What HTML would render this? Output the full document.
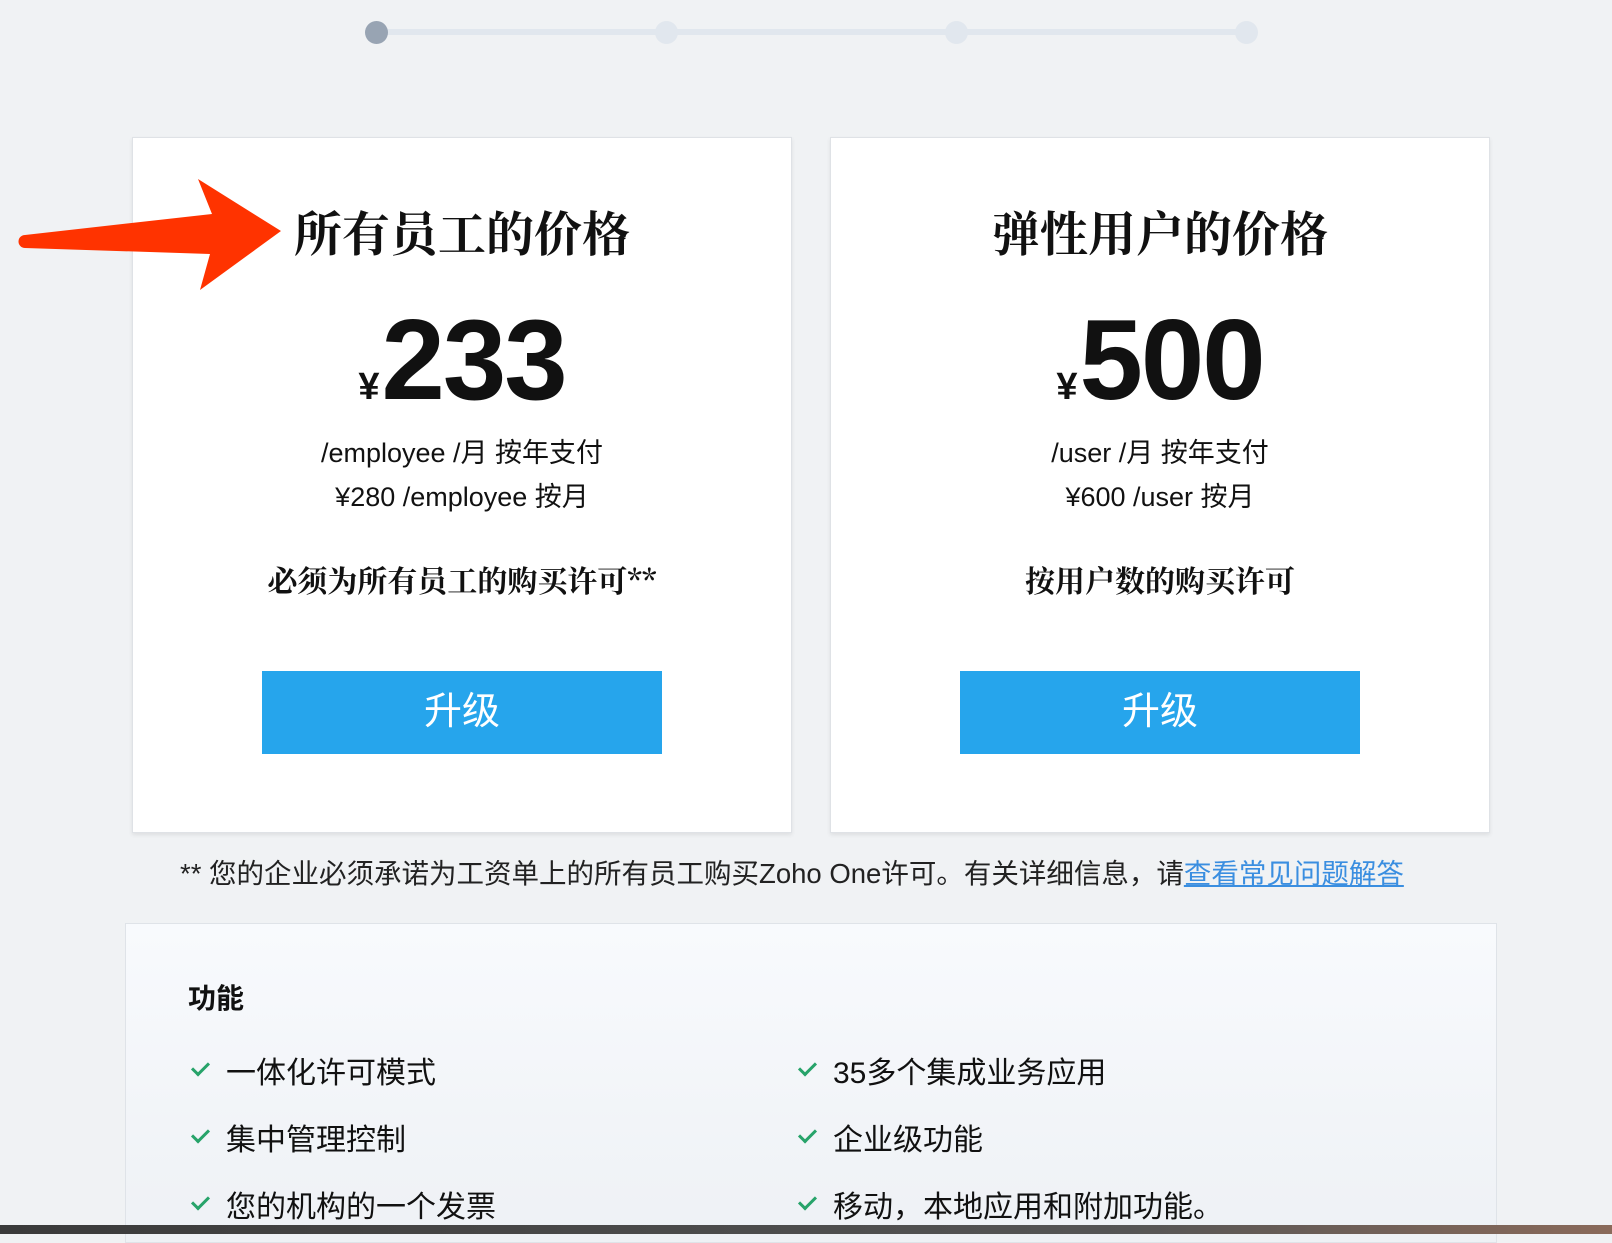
<!DOCTYPE html>
<html><head><meta charset="utf-8"><style>
*{margin:0;padding:0;box-sizing:border-box}
body{width:1612px;height:1234px;overflow:hidden;background:#f0f2f4;position:relative;font-family:"Liberation Sans","Noto Sans CJK SC",sans-serif;color:#111}
.line{position:absolute;top:29px;left:376px;width:870px;height:6px;background:#e1e7ee}
.dot{position:absolute;top:21px;width:23px;height:23px;border-radius:50%;background:#e1e7ee}
.card{position:absolute;top:137px;width:660px;height:696px;background:#fff;border:1px solid #dfe2e6;box-shadow:0 2px 4px rgba(0,0,0,.08);text-align:center}
.t{position:absolute;top:58px;width:100%;font-family:"Noto Serif CJK SC",serif;font-weight:700;font-size:48px;line-height:70px}
.p{position:absolute;top:158px;width:100%;font-weight:700;font-size:114px;line-height:130px;letter-spacing:-2px}
.p small{font-size:38px;margin-right:4px}
.l{position:absolute;width:100%;font-size:27px}
.b{position:absolute;width:100%;font-family:"Noto Serif CJK SC",serif;font-weight:700;font-size:30px}
.btn{position:absolute;left:129px;top:533px;width:400px;height:83px;background:#26a5ec;color:#fff;font-size:38px;line-height:83px}
.foot{position:absolute;top:851px;left:180px;font-size:27.5px;color:#222}
.foot a{color:#3a8ee0;text-decoration:underline}
.feat{position:absolute;left:125px;top:923px;width:1372px;height:320px;border:1px solid #dfe3e8;background:linear-gradient(#f8fafd,#eef1f5)}
.h{position:absolute;left:62px;top:53px;font-size:28px;font-weight:700}
.i{position:absolute;font-size:30px}
.i:before{content:"";position:absolute;left:-34px;top:14px;width:14px;height:7px;border-left:3px solid #27a36a;border-bottom:3px solid #27a36a;transform:rotate(-45deg)}
.bar{position:absolute;left:0;top:1225px;width:1612px;height:9px;background:linear-gradient(90deg,#3a3a3a,#555 70%,#8a6a5a)}
</style></head><body>
<div class="line"></div>
<div class="dot" style="left:365px;background:#98a4b3"></div>
<div class="dot" style="left:655px"></div>
<div class="dot" style="left:945px"></div>
<div class="dot" style="left:1235px"></div>

<div class="card" style="left:132px">
<div class="t">所有员工的价格</div>
<div class="p"><small>¥</small>233</div>
<div class="l" style="top:293px">/employee /月 按年支付</div>
<div class="l" style="top:337px">¥280 /employee 按月</div>
<div class="b" style="top:419px">必须为所有员工的购买许可**</div>
<div class="btn">升级</div>
</div>
<div class="card" style="left:830px">
<div class="t">弹性用户的价格</div>
<div class="p"><small>¥</small>500</div>
<div class="l" style="top:293px">/user /月 按年支付</div>
<div class="l" style="top:337px">¥600 /user 按月</div>
<div class="b" style="top:419px">按用户数的购买许可</div>
<div class="btn">升级</div>
</div>

<svg style="position:absolute;left:0;top:0" width="300" height="300"><path d="M25,235 L212,214 L198,179 L281,231 L200,290 L210,254 L25,248 A6.5,6.5 0 0 1 25,235Z" fill="#ff3300"/></svg>

<div class="foot">** 您的企业必须承诺为工资单上的所有员工购买Zoho One许可。有关详细信息，请<a>查看常见问题解答</a></div>

<div class="feat">
<div class="h">功能</div>
<div class="i" style="left:100px;top:124px">一体化许可模式</div>
<div class="i" style="left:100px;top:191px">集中管理控制</div>
<div class="i" style="left:100px;top:258px">您的机构的一个发票</div>
<div class="i" style="left:707px;top:124px">35多个集成业务应用</div>
<div class="i" style="left:707px;top:191px">企业级功能</div>
<div class="i" style="left:707px;top:258px">移动，本地应用和附加功能。</div>
</div>
<div class="bar"></div>
</body></html>
